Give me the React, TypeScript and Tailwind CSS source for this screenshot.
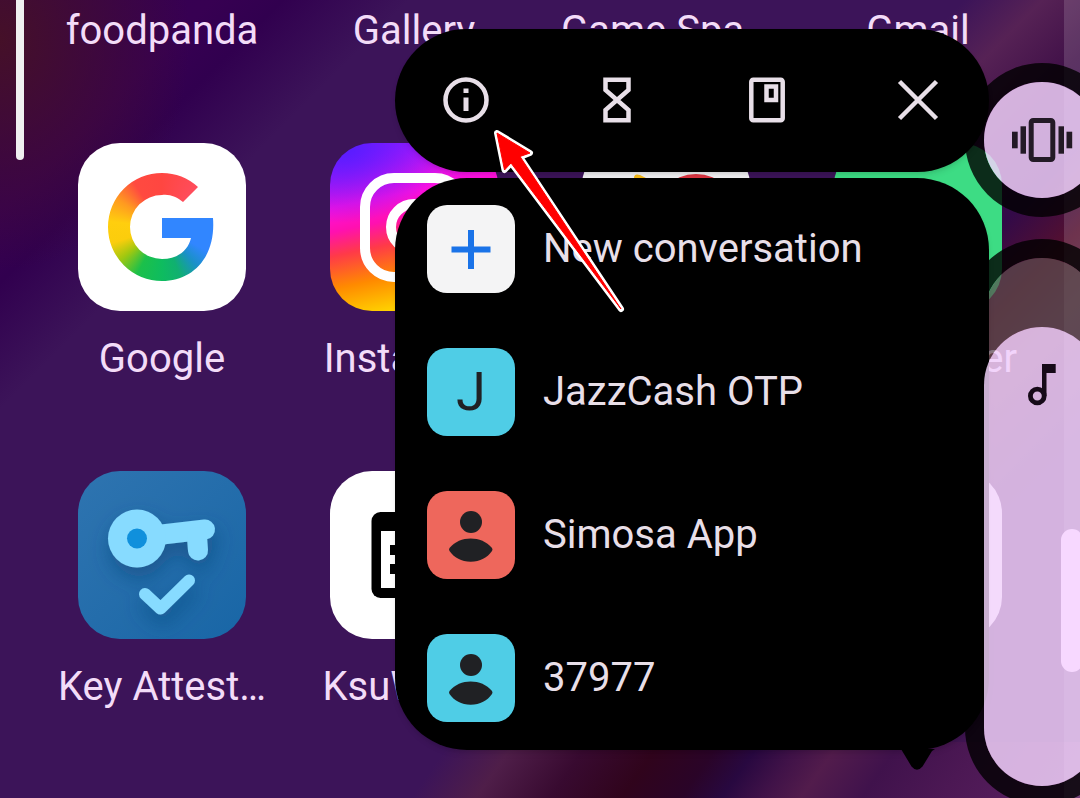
import type { ReactNode } from "react";

type AppEntry = { name: string; label?: string; icon?: ReactNode };

const tile = "relative size-[168px] overflow-hidden rounded-[42px]";

function GoogleIcon() {
  return (
    <div className={`${tile} bg-white`}>
      <div className="size-full [background:linear-gradient(#3186ff,#3186ff)_84px_75px/40px_20px_no-repeat,conic-gradient(#ff4641_0deg,#ff4d5e_45deg,#3186ff_60deg,#3186ff_118deg,#1a90c8_138deg,#10b070_160deg,#0ebc5f_180deg,#1cc04a_208deg,#a0c810_232deg,#fbcd0c_252deg,#ffce0e_276deg,#ff9a20_302deg,#ff4a40_328deg,#ff4641_360deg)] [clip-path:path('M120_44A54_54_0_0_0_84_30A54_54_0_0_0_84_138C115_138_138_114_135_75H84V95H113C110_108_99_116_84_116A32_32_0_0_1_84_52C92_51_99_54_105_59Z')]" />
    </div>
  );
}

function InstagramIcon() {
  return (
    <div className={`${tile} bg-[radial-gradient(ellipse_110px_80px_at_10px_0,#5c1cff_15%,#5c1cff00_100%),linear-gradient(168deg,#a818ff_8%,#ff10e0_32%,#ff10b0_44%,#ff3a48_56%,#ff8a00_72%,#ffd800_90%)]`}>
      <svg viewBox="0 0 168 168" className="size-full" fill="none" stroke="#fff" strokeWidth="10">
        <rect x="35" y="35" width="99" height="99" rx="29" />
        <circle cx="84" cy="84" r="23" />
        <circle cx="112" cy="57" r="6" fill="#fff" stroke="none" />
      </svg>
    </div>
  );
}

function PhotosIcon() {
  return (
    <div className={`${tile} bg-[#f1f1f3]`}>
      <svg viewBox="0 0 168 168" className="size-full">
        <path d="M52 44V35q0-5 6-3l14 7Z" fill="#f5b916" />
        <circle cx="114" cy="74" r="43" fill="#d93440" />
      </svg>
    </div>
  );
}

function KeyIcon() {
  return (
    <div className={`${tile} bg-linear-to-br from-[#2e74b0] to-[#1866a6]`}>
      <svg viewBox="0 0 168 168" className="size-full" fill="none" stroke="#87dbff" strokeLinecap="round" strokeLinejoin="round">
        <defs>
          <filter id="key-shadow" x="-40%" y="-40%" width="180%" height="200%">
            <feDropShadow dx="2" dy="10" stdDeviation="10" floodColor="#154a7c" floodOpacity="0.6" />
          </filter>
        </defs>
        <g filter="url(#key-shadow)">
          <path d="M84 63.500L127 58.500" strokeWidth="20" />
          <path d="M119 66L120 79.500" strokeWidth="20" />
          <circle cx="59" cy="67.500" r="29" fill="#87dbff" stroke="none" />
          <path d="M67 123L82.500 137.500L111 109.500" strokeWidth="12" />
        </g>
        <circle cx="59" cy="67.500" r="10" fill="#1090dc" stroke="none" />
      </svg>
    </div>
  );
}

function WebUiIcon() {
  return (
    <div className={`${tile} bg-white`}>
      <svg viewBox="0 0 168 168" className="size-full">
        <rect x="41.500" y="41" width="85" height="86" rx="9" />
        <rect x="51" y="60" width="66" height="57" fill="#fff" />
        <rect x="60" y="74" width="48" height="10" />
        <rect x="60" y="93" width="48" height="10" />
      </svg>
    </div>
  );
}

const topRow: AppEntry[] = [
  { name: "foodpanda", label: "foodpanda" },
  { name: "gallery", label: "Gallery" },
  { name: "games", label: "Game Spa…" },
  { name: "gmail", label: "Gmail" },
];

const apps: AppEntry[] = [
  { name: "google", label: "Google", icon: <GoogleIcon /> },
  { name: "instagram", label: "Instagram", icon: <InstagramIcon /> },
  { name: "photos", icon: <PhotosIcon /> },
  { name: "messenger", label: "Messenger", icon: <div className={`${tile} bg-[#3ddc84]`} /> },
  { name: "key", label: "Key Attest…", icon: <KeyIcon /> },
  { name: "ksu", label: "KsuWebUI", icon: <WebUiIcon /> },
  { name: "blank", icon: <div className={`${tile} bg-white`} /> },
  { name: "white", icon: <div className={`${tile} bg-white`} /> },
];

function AppCell({ label, icon }: AppEntry) {
  return (
    <a href="#" className="flex flex-col items-center gap-6">
      {icon}
      <span className="h-12 text-[40px] leading-[48px] whitespace-nowrap text-[#f3dcf8]">{label}</span>
    </a>
  );
}

const actions = [
  {
    name: "App info",
    art: (
      <>
        <circle cx="24" cy="24" r="20.500" />
        <path d="M24 12.500V17M24 21.500V35" strokeWidth="5" />
      </>
    ),
  },
  { name: "Pause app", art: <path d="M12.500 3.700H35.500V14L12.500 34V44.300H35.500V34L12.500 14Z" /> },
  {
    name: "Widgets",
    art: (
      <>
        <rect x="8.300" y="3.700" width="31.400" height="40.600" rx="2" />
        <rect x="23.500" y="10.500" width="9.500" height="13.500" />
      </>
    ),
  },
  { name: "Close", art: <path d="M5.500 5.500L42.500 42.500M42.500 5.500L5.500 42.500" /> },
];

function PersonGlyph() {
  return (
    <svg viewBox="0 0 88 88" className="size-full" fill="#202124">
      <circle cx="44" cy="31" r="11" />
      <path d="M22.500 60Q21.500 58.500 22.500 57C28 50.500 35.500 47.500 43.700 47.500S59.500 50.500 65 57Q66 58.500 65 60C60.500 66.500 53 70.700 43.700 70.700S27 66.500 22.500 60Z" />
    </svg>
  );
}

const shortcuts = [
  {
    label: "New conversation",
    tint: "bg-[#f4f4f5]",
    glyph: (
      <svg viewBox="0 0 88 88" className="size-full" stroke="#1a73e8" strokeWidth="6">
        <path d="M24.500 44.500H63.500M44 25V64" />
      </svg>
    ),
  },
  { label: "JazzCash OTP", tint: "bg-[#4fcde6]", glyph: <span className="text-[54px] leading-none text-[#202124]">J</span> },
  { label: "Simosa App", tint: "bg-[#ee675c]", glyph: <PersonGlyph /> },
  { label: "37977", tint: "bg-[#4fcde6]", glyph: <PersonGlyph /> },
];

function ShortcutMenu() {
  return (
    <div className="absolute top-[29px] right-[91px] z-10 flex w-[594px] flex-col gap-1.5 text-[#e8dfe8]">
      <div className="flex h-[143px] items-start justify-between rounded-[72px] bg-black px-[47px] pt-[47px] shadow-md">
        {actions.map(({ name, art }) => (
          <button key={name} aria-label={name} className="size-12">
            <svg viewBox="0 0 48 48" className="size-full" fill="none" stroke="currentColor" strokeWidth="4.500">
              {art}
            </svg>
          </button>
        ))}
      </div>
      <div className="relative flex flex-col gap-px rounded-[72px] bg-black pb-px shadow-md">
        {shortcuts.map(({ label, tint, glyph }) => (
          <button key={label} className="flex h-[142px] items-center gap-7 px-8 text-left">
            <span className={`flex size-[88px] shrink-0 items-center justify-center rounded-[20px] ${tint}`}>{glyph}</span>
            <span className="text-[40px] leading-[50px] whitespace-nowrap">{label}</span>
          </button>
        ))}
        <svg viewBox="0 0 36 22" className="absolute top-full right-[54px] -mt-px h-[22px] w-9">
          <path d="M2 0H36L33 2L23.500 17.500Q18 24 12.500 17.500Z" />
        </svg>
      </div>
    </div>
  );
}

function VolumePanel() {
  return (
    <div className="absolute top-[63px] -right-[39px] flex w-[154px] flex-col gap-[22px]">
      <div className="relative h-[154px] rounded-full border-[19px] border-black/80">
        <button aria-label="Vibrate" className="absolute inset-0 z-20 flex items-center justify-center rounded-full bg-[#f2d2fb]/83">
          <svg viewBox="0 0 64 48" className="h-12 w-16" fill="#231a26">
            <rect x="21.200" y="4.500" width="21.600" height="39" rx="2" fill="none" stroke="#231a26" strokeWidth="5" />
            <rect x="10.500" y="10.300" width="5.500" height="27.400" />
            <rect x="2" y="15.700" width="5.700" height="16.600" />
            <rect x="48.500" y="10.300" width="5.500" height="27.400" />
            <rect x="56.500" y="15.700" width="5.700" height="16.600" />
          </svg>
        </button>
      </div>
      <div className="relative h-[566px] rounded-[77px] border-[19px] border-black/80">
        <div className="flex h-full flex-col overflow-hidden rounded-[58px] pt-[69px]">
          <div className="grow rounded-[58px] shadow-[0_0_0_80px_#5b4d4fb3]" />
        </div>
        <div className="absolute inset-x-0 top-[69px] bottom-0 z-20 flex justify-center rounded-[58px] bg-[#f2d2fb]/83 pt-9">
          <svg viewBox="0 0 32 44" className="h-11 w-8" fill="#160a18">
            <path d="M16 1H29.700V10H20.500V33H16Z" />
            <circle cx="11.300" cy="33" r="6.900" fill="none" stroke="#160a18" strokeWidth="4.800" />
          </svg>
        </div>
        <input
          type="range"
          aria-label="Media volume"
          defaultValue={87}
          className="absolute inset-0 z-20 size-full opacity-0 [direction:rtl] [writing-mode:vertical-lr]"
        />
      </div>
    </div>
  );
}

export default function App() {
  return (
    <main className="relative min-h-screen overflow-hidden font-['Roboto',sans-serif] [background:linear-gradient(125deg,#3c145900_369px,#4f1e49_422px,#380a30_483px,#30041c_541px,#2a0428_590px,#280840_623px,#401248_656px,#521c4c_688px,#40124c_738px,#4c1854_803px,#5a2060_902px)_0_100%/100%_56px_no-repeat,linear-gradient(135deg,#3c145900_60px,#562255_115px,#401048_180px,#330a48_245px,#55102f_304px,#562040_350px,#401552_450px)_100%_0/200px_100%_no-repeat,radial-gradient(ellipse_190px_230px_at_0_40px,#451028_0%,#40102800_100%),linear-gradient(135deg,#350052_0px,#370052_150px,#31004f_200px,#3c1459_290px)]">
      <div className="grid grid-cols-4 gap-y-[88px] px-9 pt-[7px]">
        {topRow.map((app) => (
          <AppCell key={app.name} {...app} />
        ))}
        {apps.map((app) => (
          <AppCell key={app.name} {...app} />
        ))}
      </div>

      <div className="absolute top-0 left-4 h-40 w-2 rounded-b-full bg-[#f0f0f0]" />
      <div className="absolute inset-y-0 right-0 w-4 bg-white/15" />

      <VolumePanel />
      <ShortcutMenu />
      <div className="absolute top-[529px] -right-[3px] z-30 h-[143px] w-[22px] rounded-full bg-[#f7d8ff]" />

      <svg viewBox="0 0 140 190" className="pointer-events-none absolute top-[125px] right-[450px] z-30 h-[190px] w-[140px]">
        <path
          d="M7 8L40 28L30 32L131 184L21 38L14.500 45Z"
          fill="#fff"
          stroke="#fff"
          strokeWidth="6"
          strokeLinejoin="round"
        />
        <path d="M7 8L40 28L30 31.500L131 184L21 38L14.500 45Z" fill="#f00" stroke="#f00" strokeWidth="1" />
      </svg>
    </main>
  );
}
